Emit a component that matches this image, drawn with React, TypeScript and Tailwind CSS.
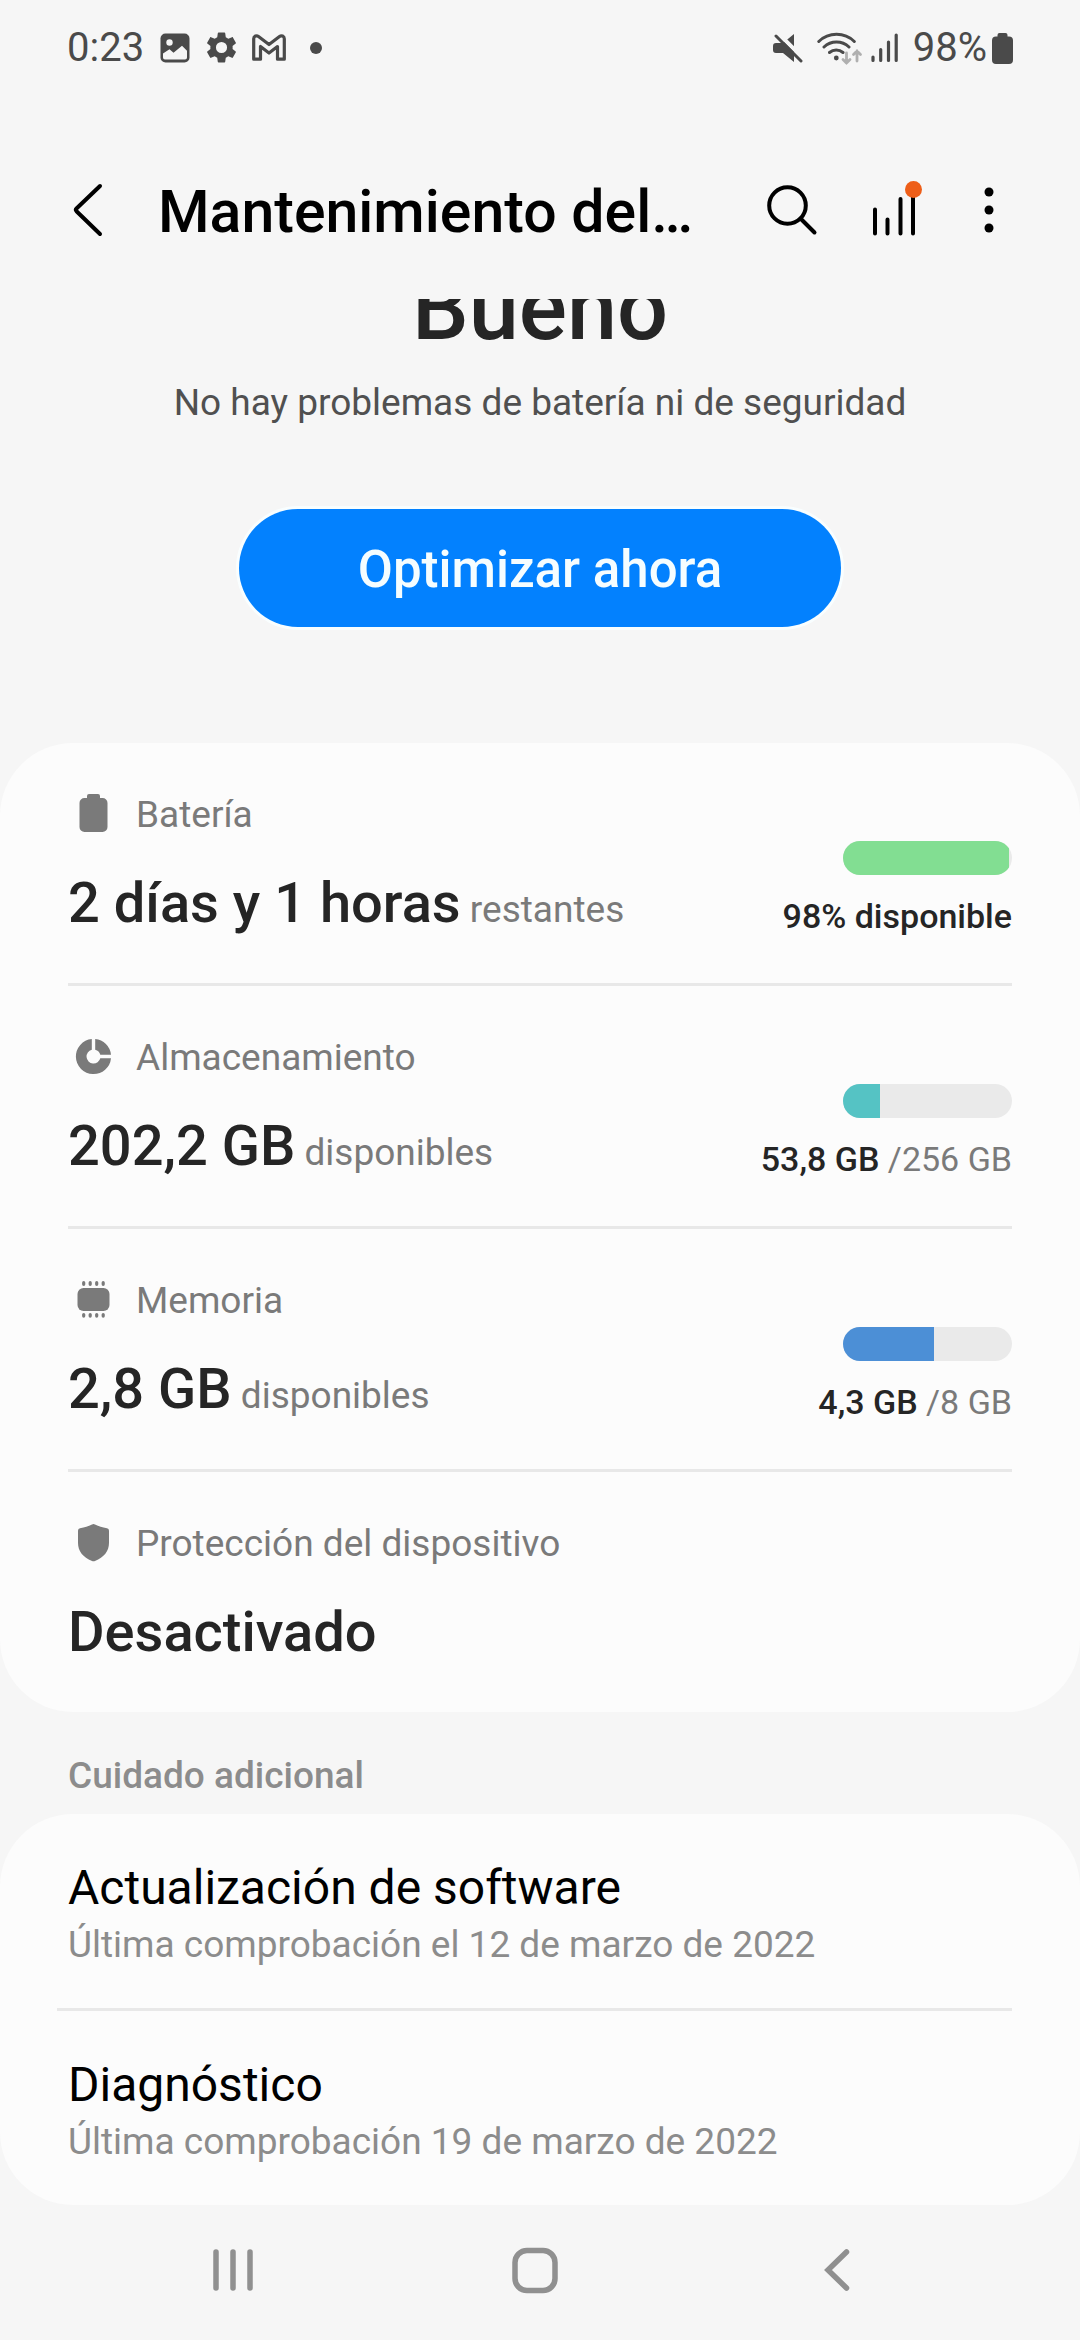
import React from "react";

const BatteryIcon = () => (
  <svg viewBox="0 0 50 50" className="size-[50px]" fill="currentColor">
    <path d="M21 4h9a2 2 0 0 1 2 2v2h2.500a5 5 0 0 1 5 5v24a5 5 0 0 1-5 5h-18a5 5 0 0 1-5-5V13a5 5 0 0 1 5-5H19V6a2 2 0 0 1 2-2z" />
  </svg>
);

const StorageIcon = () => (
  <svg viewBox="0 0 50 50" className="size-[50px]" fill="currentColor">
    <path d="M23.800 6A17.600 17.600 0 1 0 43 25.200H32.300A7 7 0 1 1 23.800 16.700z" />
    <path d="M27.200 6A17.600 17.600 0 0 1 43 21.800H32.300A7 7 0 0 0 27.200 16.700z" />
  </svg>
);

const MemoryIcon = () => (
  <svg viewBox="0 0 50 50" className="size-[50px]" fill="currentColor">
    <rect x="9.500" y="12" width="32" height="23" rx="6" />
    <path
      d="M15.700 6.700v1.600M22.200 6.700v1.600M28.700 6.700v1.600M35.200 6.700v1.600M15.700 38.500v1.600M22.200 38.500v1.600M28.700 38.500v1.600M35.200 38.500v1.600"
      stroke="currentColor"
      strokeWidth="3.200"
      strokeLinecap="round"
    />
  </svg>
);

const ShieldIcon = () => (
  <svg viewBox="0 0 50 50" className="size-[50px]" fill="currentColor">
    <path d="M24 5.500q1.500-.8 3 0c4 2 7 2.800 12 3.700q2 .4 2 2.500v12c0 8.500-5 14.500-14 18.300q-1.500.6-3 0C15 38.200 10 32.200 10 23.700v-12q0-2.100 2-2.500c5-.9 8-1.700 12-3.700z" />
  </svg>
);

const deviceItems = [
  {
    label: "Batería",
    icon: BatteryIcon,
    value: "2 días y 1 horas",
    unit: "restantes",
    usage: { percent: 98, color: "bg-[#82de92]", used: "98% disponible", total: "" },
  },
  {
    label: "Almacenamiento",
    icon: StorageIcon,
    value: "202,2 GB",
    unit: "disponibles",
    usage: { percent: 22, color: "bg-[#55c3c4]", used: "53,8 GB", total: "/256 GB" },
  },
  {
    label: "Memoria",
    icon: MemoryIcon,
    value: "2,8 GB",
    unit: "disponibles",
    usage: { percent: 54, color: "bg-[#4c8fd6]", used: "4,3 GB", total: "/8 GB" },
  },
  {
    label: "Protección del dispositivo",
    icon: ShieldIcon,
    value: "Desactivado",
  },
];

const extraItems = [
  {
    title: "Actualización de software",
    description: "Última comprobación el 12 de marzo de 2022",
  },
  {
    title: "Diagnóstico",
    description: "Última comprobación 19 de marzo de 2022",
  },
];

const StatusBar = () => (
  <div className="flex h-[94px] items-center justify-between px-[67px] pt-px text-[40px] leading-[48px] text-[#4a4a4a]">
    <div className="flex items-center">
      <span>0:23</span>
      <svg viewBox="0 0 30 30" className="ml-4 size-[30px]">
        <rect x=".5" y=".5" width="29" height="29" rx="5" fill="currentColor" />
        <circle cx="9.500" cy="9.500" r="3.200" fill="#f6f6f6" />
        <path
          d="M3 20.500l6.500-4.200 4 3.500 8.500-7 5 5v6.700a2 2 0 0 1-2 2H5a2 2 0 0 1-2-2z"
          fill="#f6f6f6"
        />
      </svg>
      <svg viewBox="2 2 20 20" className="ml-4 size-[31px]" fill="currentColor">
        <path d="M19.140 12.940c.04-.3.060-.61.060-.94 0-.32-.02-.64-.07-.94l2.030-1.580c.18-.14.230-.41.120-.61l-1.920-3.320c-.12-.22-.37-.29-.59-.22l-2.390.96c-.5-.38-1.030-.7-1.620-.94l-.36-2.540c-.04-.24-.24-.41-.48-.41h-3.840c-.24 0-.43.17-.47.41l-.36 2.540c-.59.24-1.130.57-1.620.94l-2.390-.96c-.22-.08-.47 0-.59.22L2.740 8.870c-.12.21-.08.47.12.61l2.030 1.580c-.05.3-.09.63-.09.94s.02.64.070.94l-2.030 1.580c-.18.14-.23.41-.12.61l1.920 3.320c.12.22.370.29.590.22l2.390-.96c.5.380 1.030.7 1.620.94l.36 2.540c.05.240.240.410.480.410h3.840c.24 0 .44-.17.470-.41l.36-2.540c.59-.24 1.130-.56 1.620-.94l2.390.96c.22.080.470 0 .59-.22l1.920-3.320c.12-.22.070-.47-.12-.61zM12 15.600A3.600 3.600 0 1 1 12 8.400a3.600 3.600 0 0 1 0 7.200z" />
      </svg>
      <svg
        viewBox="0 0 34 28"
        className="ml-[15px] h-[28px] w-[34px]"
        fill="none"
        stroke="currentColor"
        strokeWidth="3.200"
        strokeLinejoin="round"
      >
        <path d="M1.700 25.200V4.800C1.700 2 4.500 1 6.500 2.500L17 10.500 27.500 2.500C29.500 1 32.300 2 32.300 4.800v20.400h-6.800V12.500L17 19 8.500 12.500v12.700z" />
      </svg>
      <span className="ml-6 size-3 rounded-full bg-[#4a4a4a]" />
    </div>
    <div className="flex items-center">
      <svg viewBox="0 0 30 30" className="size-[30px]">
        <path
          d="M3 10h7L21 1v28l-11-9H3a3 3 0 0 1-3-3v-4a3 3 0 0 1 3-3z"
          fill="currentColor"
        />
        <path d="M5 0l26 26" stroke="#f6f6f6" strokeWidth="4" />
        <path
          d="M3 3l25 25"
          stroke="currentColor"
          strokeWidth="3"
          strokeLinecap="round"
        />
      </svg>
      <svg
        viewBox="0 0 46 34"
        className="ml-[14px] h-[34px] w-[46px]"
        fill="none"
        stroke="currentColor"
        strokeWidth="3"
        strokeLinecap="round"
      >
        <path d="M1.800 10.500a25.500 25.500 0 0 1 35.500 0M7 16a18 18 0 0 1 25 0M12.500 21.500a10.500 10.500 0 0 1 13.500 0" />
        <circle cx="19.300" cy="27" r="2.400" fill="currentColor" stroke="none" />
        <path
          d="M29.500 22v10m-3.500-3.500l3.500 3.500 3.500-3.500M40 30V20m-3.500 3.500l3.500-3.500 3.500 3.500"
          stroke="#b0b0b0"
          strokeWidth="2.800"
        />
      </svg>
      <svg
        viewBox="0 0 28 30"
        className="ml-2 h-[30px] w-[28px]"
        stroke="currentColor"
        strokeWidth="3.200"
        strokeLinecap="round"
      >
        <path d="M2 24v3.500M9.700 16.500v11M17.500 9v18.500M25.200 2v25.500" />
      </svg>
      <span className="ml-[14px]">98%</span>
      <svg
        viewBox="0 0 21 32"
        className="ml-[5px] h-[32px] w-[21px]"
        fill="currentColor"
      >
        <path d="M7.500 1h6q2 0 2 2v1.500H17a4 4 0 0 1 4 4V28a4 4 0 0 1-4 4H4a4 4 0 0 1-4-4V8.500a4 4 0 0 1 4-4h1.500V3q0-2 2-2z" />
      </svg>
    </div>
  </div>
);

const Header = () => (
  <header className="flex h-[205px] items-center pt-[26px] pl-[64px] pr-[67px] text-black">
    <button type="button" aria-label="Atrás">
      <svg
        viewBox="0 0 48 56"
        className="h-[56px] w-[48px]"
        fill="none"
        stroke="currentColor"
        strokeWidth="4"
        strokeLinecap="round"
        strokeLinejoin="round"
      >
        <path d="M36 4L12.500 26.500q-1.300 1.300 0 2.700L36 52" />
      </svg>
    </button>
    <h1 className="ml-[46px] flex-1 truncate pt-1 text-[59px] leading-[72px] font-medium">
      Mantenimiento del…
    </h1>
    <button type="button" aria-label="Buscar">
      <svg
        viewBox="0 0 52 52"
        className="size-[52px]"
        fill="none"
        stroke="currentColor"
        strokeWidth="4"
        strokeLinecap="round"
      >
        <circle cx="21.500" cy="21.500" r="18.300" />
        <path d="M34.500 34.500L48.500 48.500" />
      </svg>
    </button>
    <button type="button" aria-label="Uso" className="relative ml-[52px]">
      <svg
        viewBox="0 0 52 52"
        className="size-[52px]"
        fill="none"
        stroke="currentColor"
        strokeWidth="4"
        strokeLinecap="round"
      >
        <path d="M5 25.500v24M17.500 35.500v14M30.500 15v34.500M43 8v41.500" />
      </svg>
      <span className="absolute -top-[3px] right-0 size-[17px] rounded-full bg-[#ee5e18]" />
    </button>
    <button type="button" aria-label="Más opciones" className="ml-[43px]">
      <svg viewBox="0 0 48 52" className="h-[52px] w-[48px]" fill="currentColor">
        <circle cx="24" cy="8" r="4.500" />
        <circle cx="24" cy="26" r="4.500" />
        <circle cx="24" cy="44" r="4.500" />
      </svg>
    </button>
  </header>
);

const NavigationBar = () => (
  <nav className="flex h-[135px] items-center justify-around pr-[92px] pb-1 pl-[82px] text-[#909090]">
    <button type="button" aria-label="Recientes">
      <svg
        viewBox="0 0 48 48"
        className="size-12"
        stroke="currentColor"
        strokeWidth="5.500"
        strokeLinecap="round"
      >
        <path d="M7 5v36M24 5v36M41 5v36" />
      </svg>
    </button>
    <button type="button" aria-label="Inicio">
      <svg
        viewBox="0 0 48 48"
        className="size-12"
        fill="none"
        stroke="currentColor"
        strokeWidth="5.500"
      >
        <rect x="4" y="3.500" width="40" height="40" rx="12" />
      </svg>
    </button>
    <button type="button" aria-label="Volver">
      <svg
        viewBox="0 0 48 48"
        className="size-12"
        fill="none"
        stroke="currentColor"
        strokeWidth="5.500"
        strokeLinecap="round"
      >
        <path d="M33.500 5L15 23L33.500 41" />
      </svg>
    </button>
  </nav>
);

export default function App() {
  return (
    <div className="min-h-screen bg-[#f6f6f6] font-['Roboto',sans-serif]">
      <StatusBar />
      <Header />
      <main className="overflow-hidden">
        <section className="flex flex-col items-center">
          {/* scrolled partly under the header */}
          <h2 className="-mt-[35px] text-[90px] leading-[90px] font-medium text-[#252525]">
            Bueno
          </h2>
          <p className="mt-6 text-[37px] leading-[50px] text-[#505050]">
            No hay problemas de batería ni de seguridad
          </p>
          <button
            type="button"
            className="mt-[81px] h-[118px] rounded-full bg-[#0381fe] px-[119px] pt-1 text-[51px] leading-[60px] font-medium text-[#f5fdff] ring-3 ring-[#f9feff]"
          >
            Optimizar ahora
          </button>
        </section>

        <section className="mt-[116px] rounded-[73px] bg-[#fcfcfc] px-[68px]">
          {deviceItems.map((item) => (
            <a
              key={item.label}
              href="#"
              className="flex items-start justify-between border-b-3 border-[#e8e8e8] py-[47px] last:border-b-0"
            >
              <div>
                <div className="flex items-center gap-[18px] text-[37px] leading-[50px] text-[#7a7a7a]">
                  <item.icon />
                  <span>{item.label}</span>
                </div>
                <p className="mt-[30px] text-[56px] leading-[66px] font-medium text-[#252525]">
                  {item.value}
                  {item.unit && (
                    <span className="text-[37px] leading-none font-normal text-[#7a7a7a]">
                      {" "}
                      {item.unit}
                    </span>
                  )}
                </p>
              </div>
              {item.usage && (
                <div className="mt-[51px] flex flex-col items-end gap-[21px]">
                  <div className="h-[34px] w-[169px] overflow-hidden rounded-full bg-[#eaeaea]">
                    <div
                      className={`h-full ${item.usage.color}`}
                      style={{ width: `${item.usage.percent}%` }}
                    />
                  </div>
                  <p className="text-[34px] leading-[40px] text-[#7a7a7a]">
                    <span className="font-medium text-[#252525]">
                      {item.usage.used}
                    </span>
                    {item.usage.total && <span> {item.usage.total}</span>}
                  </p>
                </div>
              )}
            </a>
          ))}
        </section>

        <h3 className="px-[68px] pt-[39px] pb-[13px] text-[37px] leading-[50px] font-medium text-[#8c8c8c]">
          Cuidado adicional
        </h3>

        <section className="rounded-[73px] bg-[#fcfcfc] pr-[68px] pl-[57px]">
          {extraItems.map((item) => (
            <a
              key={item.title}
              href="#"
              className="block border-b-3 border-[#e8e8e8] pt-[46px] pb-[38px] pl-[11px] last:border-b-0"
            >
              <p className="text-[48px] leading-[56px] text-black">{item.title}</p>
              <p className="mt-1 text-[37px] leading-[50px] text-[#8c8c8c]">
                {item.description}
              </p>
            </a>
          ))}
        </section>
      </main>
      <NavigationBar />
    </div>
  );
}
